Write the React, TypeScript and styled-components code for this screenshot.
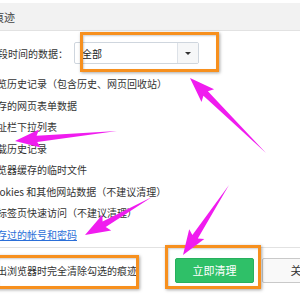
import React from "react";
import styled, { createGlobalStyle } from "styled-components";

const Global = createGlobalStyle`
  html, body { margin: 0; padding: 0; background: #fff; overflow: hidden; }
  body { font-family: "Noto Sans CJK SC", "Noto Sans", sans-serif; }
`;

const Frame = styled.div`
  position: relative;
  width: 300px;
  height: 300px;
  overflow: hidden;
  background: #fff;
  color: #333;
  font-family: "Noto Sans CJK SC", "Noto Sans", sans-serif;
`;

const TitleBar = styled.div`
  margin-top: 3px;
  height: 27px;
  background: #f2f2f2;
  border-bottom: 1px solid #e2e2e2;
  display: flex;
  align-items: center;
  font-size: 11px;
  color: #444;
`;

const Title = styled.span`
  margin-left: -51px;
  white-space: nowrap;
`;

const Body = styled.div`
  margin-left: -32px;
  display: flex;
  flex-direction: column;
`;

const TimeRow = styled.div`
  margin-top: 11px;
  height: 22px;
  display: flex;
  align-items: center;
  gap: 6px;
  font-size: 10px;
  white-space: nowrap;
`;

const Select = styled.div`
  box-sizing: border-box;
  width: 125px;
  height: 22px;
  border: 1px solid #cfd6de;
  border-radius: 2px;
  display: flex;
  background: #fff;
`;

const SelectValue = styled.div`
  flex: 1;
  display: flex;
  align-items: center;
  padding-left: 7px;
  font-size: 10px;
  color: #222;
`;

const SelectButton = styled.div`
  width: 20px;
  border-left: 1px solid #dde2e8;
  background: #f6f7f8;
  display: flex;
  align-items: center;
  justify-content: center;
  &::after {
    content: "";
    border-left: 3px solid transparent;
    border-right: 3px solid transparent;
    border-top: 3px solid #333;
  }
`;

const List = styled.div`
  margin-top: 9px;
  display: flex;
  flex-direction: column;
`;

const Row = styled.label`
  height: 21.5px;
  display: flex;
  align-items: center;
  gap: 6px;
  font-size: 10px;
  white-space: nowrap;
`;

const Box = styled.span<{ $on?: boolean }>`
  box-sizing: border-box;
  width: 13px;
  height: 13px;
  flex: none;
  border: 1px solid ${(p) => (p.$on ? "#2dbe66" : "#aaa")};
  background: ${(p) => (p.$on ? "#2dbe66" : "#fff")};
  border-radius: 2px;
`;

const LinkText = styled.span`
  color: #2b6fd8;
  text-decoration: underline;
`;

const Footer = styled.div`
  margin-top: 2px;
  height: 44px;
  border-top: 1px solid #e2e2e2;
  display: flex;
  align-items: center;
  font-size: 10px;
  white-space: nowrap;
`;

const FooterCheck = styled.label`
  display: flex;
  align-items: center;
  gap: 6px;
`;

const Buttons = styled.div`
  margin-left: 38px;
  display: flex;
  gap: 8px;
`;

const Button = styled.div<{ $primary?: boolean }>`
  box-sizing: border-box;
  width: 79px;
  height: 25px;
  flex: none;
  border-radius: 2px;
  display: flex;
  align-items: center;
  justify-content: center;
  font-size: 11px;
  border: 1px solid ${(p) => (p.$primary ? "#27b05d" : "#c9c9c9")};
  background: ${(p) => (p.$primary ? "#2fc068" : "#f9f9f9")};
  color: ${(p) => (p.$primary ? "#fff" : "#333")};
`;

const Highlight = styled.div<{ $x: number; $y: number; $w: number; $h: number }>`
  position: absolute;
  left: ${(p) => p.$x}px;
  top: ${(p) => p.$y}px;
  width: ${(p) => p.$w}px;
  height: ${(p) => p.$h}px;
  box-sizing: border-box;
  border: 3px solid #f7901e;
  box-shadow: 1px 1px 3px rgba(0, 0, 0, 0.35), inset 1px 1px 2px rgba(0, 0, 0, 0.2);
  pointer-events: none;
`;

const ArrowLayer = styled.svg`
  position: absolute;
  left: 0;
  top: 0;
  width: 300px;
  height: 300px;
  pointer-events: none;
`;

function arrow(tx: number, ty: number, px: number, py: number, L = 22, hw = 9, sw = 3.2) {
  const dx = px - tx;
  const dy = py - ty;
  const len = Math.hypot(dx, dy);
  const ux = dx / len;
  const uy = dy / len;
  const nx = -uy;
  const ny = ux;
  const bx = px - ux * L;
  const by = py - uy * L;
  const wx = bx - ux * 3;
  const wy = by - uy * 3;
  const pts = [
    [tx, ty],
    [bx + nx * sw, by + ny * sw],
    [wx + nx * hw, wy + ny * hw],
    [px, py],
    [wx - nx * hw, wy - ny * hw],
    [bx - nx * sw, by - ny * sw],
  ];
  return pts.map((p) => p.map((v) => v.toFixed(1)).join(",")).join(" ");
}

const items: { text: string; on: boolean; link?: boolean }[] = [
  { text: "浏览历史记录（包含历史、网页回收站）", on: true },
  { text: "保存的网页表单数据", on: true },
  { text: "地址栏下拉列表", on: true },
  { text: "下载历史记录", on: true },
  { text: "浏览器缓存的临时文件", on: true },
  { text: "Cookies 和其他网站数据（不建议清理）", on: false },
  { text: "新标签页快速访问（不建议清理）", on: false },
  { text: "保存过的帐号和密码", on: false, link: true },
];

export default function App() {
  return (
    <>
      <Global />
      <Frame>
        <TitleBar>
          <Title>清除上网痕迹</Title>
        </TitleBar>
        <Body>
          <TimeRow>
            <span>清除这段时间的数据：</span>
            <Select>
              <SelectValue>全部</SelectValue>
              <SelectButton />
            </Select>
          </TimeRow>
          <List>
            {items.map((it) => (
              <Row key={it.text}>
                <Box $on={it.on} />
                {it.link ? <LinkText>{it.text}</LinkText> : <span>{it.text}</span>}
              </Row>
            ))}
          </List>
          <Footer>
            <FooterCheck>
              <Box />
              <span>退出浏览器时完全清除勾选的痕迹</span>
            </FooterCheck>
            <Buttons>
              <Button $primary>立即清理</Button>
              <Button>关闭</Button>
            </Buttons>
          </Footer>
        </Body>
        <Highlight $x={80} $y={32} $w={139} $h={40} />
        <Highlight $x={-5} $y={255} $w={144} $h={34} />
        <Highlight $x={165} $y={245} $w={96} $h={44} />
        <ArrowLayer viewBox="0 0 300 300">
          <g fill="#f01cef">
            <polygon points={arrow(266, 153, 190, 78)} />
            <polygon points={arrow(117, 131, 15, 141)} />
            <polygon points={arrow(152, 197, 85, 235)} />
            <polygon points={arrow(229, 185, 183, 255)} />
          </g>
        </ArrowLayer>
      </Frame>
    </>
  );
}
